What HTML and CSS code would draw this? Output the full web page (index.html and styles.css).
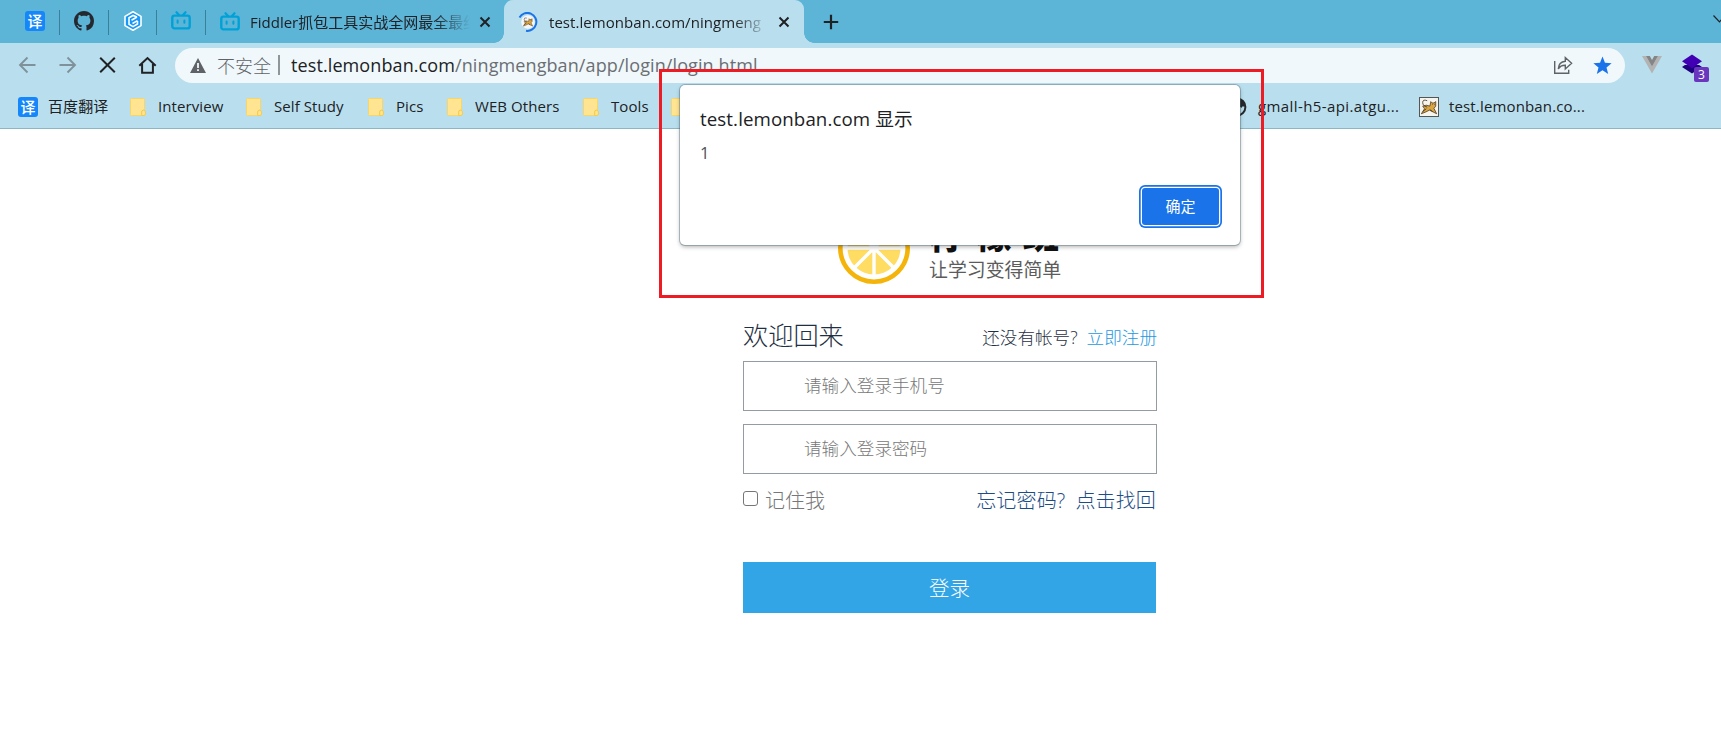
FILE: index.html
```html
<!DOCTYPE html>
<html lang="zh-CN">
<head>
<meta charset="utf-8">
<title>test.lemonban.com</title>
<link rel="stylesheet" href="styles.css">
</head>
<body>
<svg class="defs" width="0" height="0" aria-hidden="true">
  <symbol id="bili" viewBox="0 0 20 20"><path d="M5.500 1.200 8 4M14.500 1.200 12 4" fill="none" stroke="#00a1d6" stroke-width="2.200" stroke-linecap="round"/><rect x="1.300" y="4.600" width="17.400" height="12.800" rx="2.200" fill="none" stroke="#00a1d6" stroke-width="2.400"/><path d="M6.600 9.500v2.200M13.400 9.500v2.200" stroke="#00a1d6" stroke-width="2" stroke-linecap="round"/></symbol>
  <symbol id="folder" viewBox="0 0 16 18"><path d="M.5 1.500q0-1 1-1h12q1 0 1 1v10.700h-1.300q-1.500.3-1.500 2v3.300H1.500q-1 0-1-1z" fill="#ffe592" stroke="#f8d568"/><path d="M11.700 17.500v-3.500q0-1.800 1.800-1.800t1.900 1.800v2q0 1.500-1.500 1.500z" fill="#ffe592" stroke="#f5ca4a"/></symbol>
  <symbol id="close" viewBox="0 0 12 12"><path d="m1.500 1.500 9 9m0-9-9 9" stroke="#202124" stroke-width="2" fill="none"/></symbol>
  <symbol id="cat" viewBox="0 0 20 20"><path d="M1.500 17.500 5 12l-2-3 4-1 4 1 1-5 1.500 1.500h2L17.500 4v5l-2 2.500 3 6-4-2-4-2-4 2z" fill="#d9a441" stroke="#3d3020" stroke-width=".8"/><path d="M8 3Q3 1 3 5t5 5M3 15l4-3m4 1 3 2M13.500 7h.7m1.800 0h.7" fill="none" stroke="#3d3020" stroke-width=".9"/></symbol>
</svg>

<header class="browser">
  <div class="tabstrip">
    <div class="pinned p1"><span class="yi">译</span></div>
    <div class="pinned p2">
      <svg width="20" height="20" viewBox="0 0 16 16"><path fill="#24292f" d="M8 0C3.580 0 0 3.580 0 8c0 3.540 2.290 6.530 5.470 7.590.4.070.55-.17.55-.38 0-.19-.01-.82-.01-1.490-2.010.37-2.530-.49-2.690-.94-.09-.23-.48-.94-.82-1.130-.28-.15-.68-.52-.01-.53.63-.01 1.080.58 1.230.82.72 1.210 1.870.87 2.330.66.070-.52.28-.87.510-1.070-1.780-.2-3.640-.89-3.640-3.950 0-.87.310-1.590.82-2.150-.08-.2-.36-1.020.08-2.120 0 0 .67-.21 2.200.82.64-.18 1.320-.27 2-.27s1.360.09 2 .27c1.530-1.040 2.200-.82 2.200-.82.44 1.100.16 1.920.08 2.120.51.56.82 1.270.82 2.150 0 3.070-1.870 3.750-3.650 3.950.29.25.54.73.54 1.480 0 1.070-.01 1.930-.01 2.200 0 .21.15.46.55.38A8.010 8.010 0 0 0 16 8c0-4.420-3.580-8-8-8z"/></svg>
    </div>
    <div class="pinned p3">
      <svg width="20" height="20" viewBox="0 0 20 20"><path d="M10 .8 18 5.400v9.200L10 19.200 2 14.600V5.400z" fill="#1597fb" stroke="#fff" stroke-width="1.600" stroke-linejoin="round"/><path d="M14 6 10 4.500 6 6.700v6.600l4 2.300 4.500-2.600v-3M8.500 9.300 14 6M9.500 12.500l5-2.900" fill="none" stroke="#fff" stroke-width="1.600"/></svg>
    </div>
    <div class="pinned p4"><svg width="20" height="20"><use href="#bili"/></svg></div>
    <div class="tab">
      <svg width="20" height="20"><use href="#bili"/></svg>
      <span class="tab-title fiddler">Fiddler抓包工具实战全网最全最细</span>
      <svg class="x" width="12" height="12"><use href="#close"/></svg>
    </div>
    <div class="tab active">
      <svg width="20" height="20" viewBox="0 0 20 20"><circle cx="10" cy="10" r="6.800" fill="#f6f6f6"/><use href="#cat" x="4.500" y="4.500" width="11" height="11"/><path d="M1.500 5.500A9 9 0 1 1 8 18.800" fill="none" stroke="#1a73e8" stroke-width="2"/></svg>
      <span class="tab-title lemon">test.lemonban.com/ningmeng</span>
      <svg class="x" width="12" height="12"><use href="#close"/></svg>
    </div>
    <svg class="plus" width="16" height="16" viewBox="0 0 16 16"><path d="M8 .8v14.400M.8 8h14.400" stroke="#202124" stroke-width="2.200"/></svg>
    <svg class="chev" width="8" height="8" viewBox="0 0 8 8"><path d="m.5.500 6 6.300L12 .5" fill="none" stroke="#202124" stroke-width="1.200"/></svg>
  </div>

  <div class="toolbar">
    <svg class="nav" width="20" height="20" viewBox="0 0 20 20"><path d="M18.500 10H3.500M10.500 2.500 3 10l7.500 7.500" fill="none" stroke="#7f929b" stroke-width="1.900"/></svg>
    <svg class="nav" width="20" height="20" viewBox="0 0 20 20"><path d="M2.500 10h15M10.500 2.500 18 10l-7.500 7.500" fill="none" stroke="#7f929b" stroke-width="1.900"/></svg>
    <svg class="nav" width="20" height="20" viewBox="0 0 20 20"><path d="m3.200 2.700 14.600 14.600m0-14.600L3.200 17.300" fill="none" stroke="#202124" stroke-width="2"/></svg>
    <svg class="nav" width="20" height="20" viewBox="0 0 20 20"><path d="M2.300 10.700 10.500 3l8.200 7.700M5.100 9v8.700h10.800V9" fill="none" stroke="#202124" stroke-width="2"/></svg>
    <div class="omnibox">
      <svg width="16" height="15" viewBox="0 0 16 15"><path d="M8 0 16 15H0z" fill="#5f6368"/><path d="M8 5v5M8 11.300v1.800" stroke="#f0f8fb" stroke-width="1.800"/></svg>
      <span class="insecure">不安全</span><i class="bar"></i>
      <span class="url"><b>test.lemonban.com</b>/ningmengban/app/login/login.html</span>
      <svg class="share" width="20" height="20" viewBox="0 0 20 20"><path d="M1.700 6v12.200h14v-3.500M5.300 14c.2-5 2.800-7.300 7-7.700V2.500l6.300 5.700-6.300 5.700v-3.600c-3.300-.1-5.500 1.100-7 3.700z" fill="none" stroke="#5f6368" stroke-width="1.400"/></svg>
      <svg width="19" height="19" viewBox="0 0 20 20"><path d="m10 .5 2.600 6.500 7 .5-5.400 4.500 1.800 6.900-6-3.800-6 3.800 1.800-6.900L.4 7.500l7-.5z" fill="#1a73e8"/></svg>
    </div>
    <svg class="vue" width="20" height="18" viewBox="0 0 20 18"><path d="M0 0h4l6 10.500L16 0h4L10 17.500z" fill="#b3b3b3"/><path d="M4 0h3.800L10 4l2.200-4H16l-6 10.500z" fill="#858585"/></svg>
    <div class="ext">
      <svg width="20" height="21" viewBox="0 0 21 21"><path d="m0 13 3-2h15l3 2-10.500 7z" fill="#1f0080"/><path d="M10.500 0 21 7l-10.500 7.500L0 7z" fill="#4200b4"/></svg>
      <span>3</span>
    </div>
  </div>

  <nav class="bookmarks">
    <a class="w1"><span class="yi">译</span><span class="zh">百度翻译</span></a>
    <a class="w2"><svg width="16" height="18"><use href="#folder"/></svg><span>Interview</span></a>
    <a class="w3"><svg width="16" height="18"><use href="#folder"/></svg><span>Self Study</span></a>
    <a class="w4"><svg width="16" height="18"><use href="#folder"/></svg><span>Pics</span></a>
    <a class="w5"><svg width="16" height="18"><use href="#folder"/></svg><span>WEB Others</span></a>
    <a class="w6"><svg width="16" height="18"><use href="#folder"/></svg><span>Tools</span></a>
    <a class="w7"><svg width="16" height="18"><use href="#folder"/></svg></a>
    <a class="w8"><svg width="20" height="20" viewBox="0 0 20 20"><circle cx="10" cy="10" r="8.400" fill="none" stroke="#27292c" stroke-width="2"/><path d="M9 2c5-1 9 3 9.300 7.500h-3l-1 1.500-1.500-1.500H9z" fill="#27292c"/></svg><span>gmall-h5-api.atgu...</span></a>
    <a class="w9"><span class="catbox"><svg width="18" height="18"><use href="#cat"/></svg></span><span>test.lemonban.co...</span></a>
  </nav>
</header>

<main class="page">
  <div class="brand">
    <svg width="72" height="72" viewBox="0 0 72 72"><circle cx="36" cy="36" r="33.700" fill="#fff" stroke="#f5b40a" stroke-width="4.600"/><circle cx="36" cy="36" r="26.500" fill="#ffdc62"/><path d="M36 8v56M8 36h56M16 16l40 40M56 16 16 56" stroke="#fff" stroke-width="3.400"/></svg>
    <div class="brand-text"><strong>柠檬班</strong><span>让学习变得简单</span></div>
  </div>
  <form class="login">
    <div class="head"><h1>欢迎回来</h1><p>还没有帐号?<a>立即注册</a></p></div>
    <div class="field">请输入登录手机号</div>
    <div class="field">请输入登录密码</div>
    <div class="opts"><i class="check"></i><span>记住我</span><a>忘记密码?<em>点击找回</em></a></div>
    <div class="submit">登录</div>
  </form>
</main>

<div class="dialog">
  <h2>test.lemonban.com 显示</h2>
  <p>1</p>
  <div class="ok">确定</div>
</div>
<div class="highlight"></div>
</body>
</html>
```
FILE: styles.css
```css
* { box-sizing: border-box; }
body { margin: 0; width: 1721px; height: 748px; overflow: hidden; position: relative; background: #fff; color: #202124; font-family: "Open Sans", "Noto Sans CJK SC", sans-serif; }
svg { display: block; flex: none; }
.defs { position: absolute; }
span, strong, a, p, h1, h2 { white-space: nowrap; }
h1, h2, p { margin: 0; font-weight: 400; }

.browser { height: 129px; background: #b9dfee; border-bottom: 1px solid #8db6c4; }
.tabstrip { height: 43px; background: #5cb4d7; display: flex; align-items: center; }
.pinned { height: 25px; display: flex; align-items: center; border-right: 1px solid #3b7f9b; margin-top: 1px; padding-bottom: 2px; }
.p1 { width: 60px; padding-left: 25px; }
.p2 { width: 49px; padding-left: 14px; }
.p3 { width: 48px; padding-left: 14px; }
.p4 { width: 49px; padding-left: 14px; }
.yi { width: 20px; height: 20px; border-radius: 3px; background: #1687fb; color: #fff; font: 500 15px/19px "Noto Sans CJK SC", sans-serif; text-align: center; flex: none; }
.tab { width: 298px; height: 43px; display: flex; align-items: center; padding-left: 14px; }
.tab-title { overflow: hidden; width: 220px; margin-left: 10px; font-size: 15px; line-height: 24px; -webkit-mask-image: linear-gradient(90deg, #000 185px, transparent 220px); mask-image: linear-gradient(90deg, #000 185px, transparent 220px); }
.lemon { margin-left: 11px; width: 219px; letter-spacing: .05px; }
.x { margin-left: 9px; }
.tab.active .x { margin-left: 10px; }
.tab.active { width: 300px; background: #b9dfee; border-radius: 9px 9px 0 0; position: relative; }
.tab.active::before, .tab.active::after { content: ""; position: absolute; bottom: 0; width: 10px; height: 10px; }
.tab.active::before { left: -10px; background: radial-gradient(circle at 0 0, transparent 9.500px, #b9dfee 10px); }
.tab.active::after { right: -10px; background: radial-gradient(circle at 100% 0, transparent 9.500px, #b9dfee 10px); }
.plus { margin-left: 19px; }
.chev { margin: -6px 0 0 auto; }

.toolbar { height: 43px; display: flex; align-items: center; padding: 1px 0 0 17px; }
.nav { margin-right: 20px; }
.omnibox { width: 1450px; height: 35px; margin-left: -2px; border-radius: 18px; background: #f0f8fb; display: flex; align-items: center; padding: 0 13px 0 15px; font-size: 18px; }
.insecure { margin-left: 11px; width: 54px; color: #5f6368; font: 300 18px/30px "Noto Sans CJK SC", sans-serif; }
.bar { width: 2px; height: 20px; background: #909598; margin: 0 11px 0 7px; }
.url { color: #6b6f73; line-height: 30px; letter-spacing: .1px; }
.url b { font-weight: 400; color: #202124; }
.share { margin: 0 20px 0 auto; }
.vue { margin-left: 17px; }
.ext { position: relative; margin-left: 20px; margin-top: -1px; }
.ext span { position: absolute; left: 12px; top: 13px; width: 15px; height: 15px; border-radius: 2px; background: #6a36bd; color: #fff; font: 12px/15px "Open Sans", sans-serif; text-align: center; }

.bookmarks { height: 42px; display: flex; align-items: center; padding: 0 0 1px 18px; font-size: 15px; letter-spacing: .08px; }
.bookmarks a { display: flex; align-items: center; gap: 12px; line-height: 24px; }
.bookmarks a > span:last-child { margin-top: -1px; }
.bookmarks .w1 { width: 112px; gap: 10px; }
.w2 { width: 116px; } .w3 { width: 122px; } .w4 { width: 79px; } .w5 { width: 136px; } .w6 { width: 88px; } .w7 { width: 556px; }
.bookmarks .w8 { width: 192px; gap: 11px; letter-spacing: .4px; }
.bookmarks .w9 { gap: 10px; letter-spacing: .15px; }
.catbox { width: 20px; height: 20px; border: 1px solid #555; background: #f7f4ee; }

.page { display: flex; flex-direction: column; }
.brand { height: 72px; margin: 83px 0 0 838px; display: flex; }
.brand-text { margin-left: 19px; width: 150px; display: flex; flex-direction: column; }
.brand-text strong { font: 900 36px/40px "Noto Sans CJK SC", sans-serif; letter-spacing: 11px; color: #111; margin-top: 1px; }
.brand-text span { font: 400 18.900px/24px "Noto Sans CJK SC", sans-serif; color: #5c5c5c; margin-top: 4px; }
.login { width: 414px; margin: 34px 0 0 743px; font-weight: 300; }
.head { height: 43px; display: flex; justify-content: space-between; color: #1f3042; }
.head h1 { font-size: 25.200px; font-weight: 300; line-height: 34px; }
.head p { font-size: 17.600px; font-weight: 300; line-height: 38px; }
.head a { color: #1c98e0; margin-left: 9px; }
.field { height: 50px; border: 1px solid #929ca2; padding-left: 60px; font-size: 17.600px; line-height: 47px; color: #777; margin-bottom: 13px; }
.opts { display: flex; align-items: center; height: 50px; margin-top: -13px; font-size: 20px; color: #777; }
.check { width: 15px; height: 15px; border: 1.500px solid #767676; border-radius: 3px; margin-right: 7px; margin-top: -2px; }
.opts a { margin-left: auto; color: #1c4d86; padding-right: 1px; letter-spacing: .15px; }
.opts em { font-style: normal; margin-left: 10px; }
.submit { width: 413px; height: 51px; margin-top: 38px; background: #32a5e7; color: #fff; font-size: 20.500px; line-height: 53px; text-align: center; }

.dialog { position: absolute; left: 680px; top: 85px; width: 560px; height: 160px; background: #fff; border-radius: 5px; box-shadow: 0 0 0 1px rgba(80,110,125,.4), 0 2px 4px rgba(0,0,0,.3); padding: 19px 20px; }
.dialog h2 { font-size: 18.700px; line-height: 30px; letter-spacing: .1px; }
.dialog p { font-size: 16.500px; line-height: 24px; margin-top: 7px; color: #4d5156; }
.ok { position: absolute; right: 21px; top: 103px; width: 77px; height: 37px; border-radius: 3px; background: #1a73e8; box-shadow: 0 0 0 1.300px #fff, 0 0 0 3px #1a73e8; color: #fff; font-size: 15px; line-height: 37px; text-align: center; }
.highlight { position: absolute; left: 659px; top: 69px; width: 605px; height: 229px; border: 3px solid #ed1c24; pointer-events: none; }
```
